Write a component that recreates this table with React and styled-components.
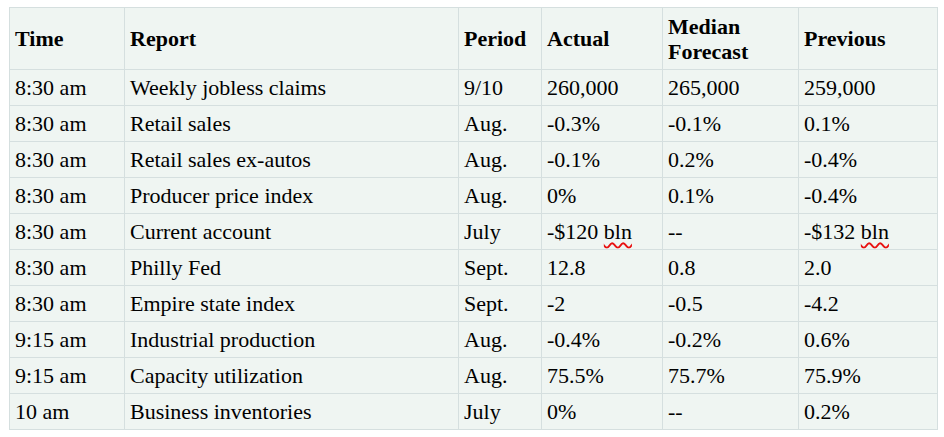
import React from "react";
import styled, { createGlobalStyle } from "styled-components";

const GlobalStyle = createGlobalStyle`
  html, body {
    margin: 0;
    padding: 0;
    background: #ffffff;
  }
`;

const Page = styled.div`
  padding: 7px 0 0 9px;
`;

const Table = styled.table`
  border-collapse: collapse;
  table-layout: fixed;
  width: 928px;
  background: #eff5f2;
  font-family: "Liberation Serif", "Times New Roman", serif;
  font-size: 22px;
  color: #000;
`;

const HeadCell = styled.th`
  height: 61px;
  padding: 0 5px;
  border: 1px solid #d5dfdf;
  text-align: left;
  vertical-align: middle;
  font-weight: bold;
  line-height: 25px;
`;

const Cell = styled.td`
  height: 35px;
  padding: 0 5px;
  border: 1px solid #d5dfdf;
  vertical-align: middle;
  line-height: 24px;
  white-space: nowrap;
`;

const Misspelt = styled.span`
  text-decoration: underline wavy #e81010;
  text-decoration-thickness: 1.5px;
  text-underline-offset: 3px;
`;

const widths = [115, 334, 83, 121, 136, 139];

const headers = ["Time", "Report", "Period", "Actual", "Median Forecast", "Previous"];

const rows = [
  ["8:30 am", "Weekly jobless claims", "9/10", "260,000", "265,000", "259,000"],
  ["8:30 am", "Retail sales", "Aug.", "-0.3%", "-0.1%", "0.1%"],
  ["8:30 am", "Retail sales ex-autos", "Aug.", "-0.1%", "0.2%", "-0.4%"],
  ["8:30 am", "Producer price index", "Aug.", "0%", "0.1%", "-0.4%"],
  ["8:30 am", "Current account", "July", "-$120 bln", "--", "-$132 bln"],
  ["8:30 am", "Philly Fed", "Sept.", "12.8", "0.8", "2.0"],
  ["8:30 am", "Empire state index", "Sept.", "-2", "-0.5", "-4.2"],
  ["9:15 am", "Industrial production", "Aug.", "-0.4%", "-0.2%", "0.6%"],
  ["9:15 am", "Capacity utilization", "Aug.", "75.5%", "75.7%", "75.9%"],
  ["10 am", "Business inventories", "July", "0%", "--", "0.2%"],
];

function renderValue(value) {
  if (value.endsWith(" bln")) {
    return (
      <>
        {value.slice(0, -3)}
        <Misspelt>bln</Misspelt>
      </>
    );
  }
  return value;
}

export default function App() {
  return (
    <>
      <GlobalStyle />
      <Page>
        <Table>
          <colgroup>
            {widths.map((w, i) => (
              <col key={i} style={{ width: w }} />
            ))}
          </colgroup>
          <thead>
            <tr>
              {headers.map((h) => (
                <HeadCell key={h}>{h}</HeadCell>
              ))}
            </tr>
          </thead>
          <tbody>
            {rows.map((row, r) => (
              <tr key={r}>
                {row.map((value, c) => (
                  <Cell key={c}>{renderValue(value)}</Cell>
                ))}
              </tr>
            ))}
          </tbody>
        </Table>
      </Page>
    </>
  );
}
